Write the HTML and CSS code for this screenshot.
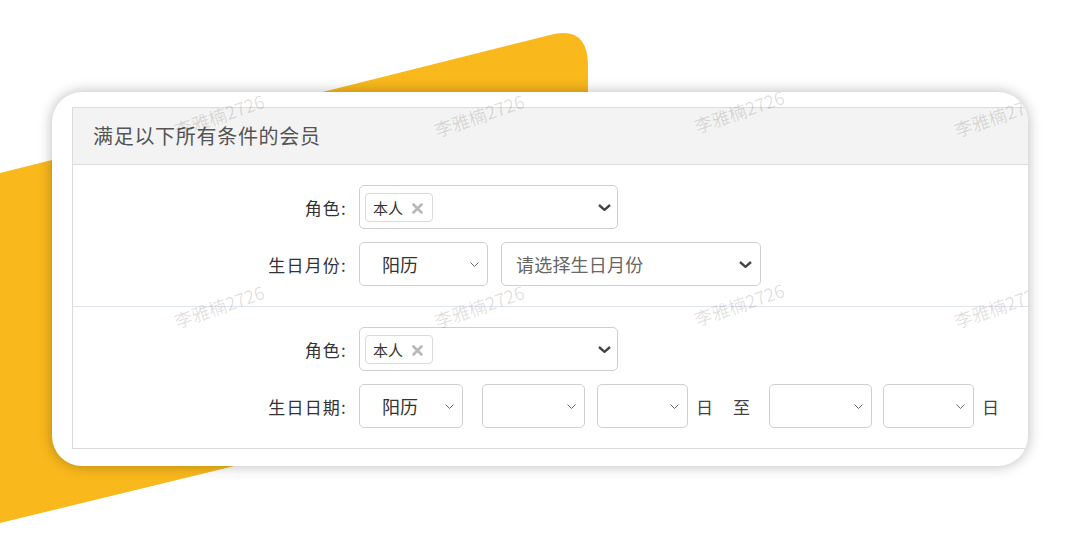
FILE: index.html
```html
<!DOCTYPE html>
<html lang="zh-CN">
<head>
<meta charset="utf-8">
<title>会员条件</title>
<link rel="stylesheet" href="styles.css">
</head>
<body>
<svg class="deco" width="600" height="548" viewBox="0 0 600 548" aria-hidden="true">
  <path d="M0,173 L550,35 Q588,25 588,66 L588,380 L0,523 Z" fill="#F9B81C"/>
</svg>
<div class="card">
  <div class="panel">
    <div class="panel-head">满足以下所有条件的会员</div>
    <div class="section">
      <div class="row">
        <div class="label">角色:</div>
        <div class="sel sel-multi">
          <span class="tag">本人<svg class="tag-x" width="11" height="11" viewBox="0 0 11 11"><path d="M1.5,1.5 L9.5,9.5 M9.5,1.5 L1.5,9.5" stroke="#b8b8b8" stroke-width="2.6" stroke-linecap="round"/></svg></span>
          <svg class="chev-bold" width="13" height="7" viewBox="0 0 13 7"><polyline points="1,1 6.5,5.8 12,1" fill="none" stroke="#444" stroke-width="2.4"/></svg>
        </div>
      </div>
      <div class="row">
        <div class="label">生日月份:</div>
        <div class="sel sel-cal w129">
          <span class="val">阳历</span>
          <svg class="chev-thin" width="9" height="5" viewBox="0 0 9 5"><polyline points="0.5,0.5 4.5,4.5 8.5,0.5" fill="none" stroke="#666" stroke-width="1"/></svg>
        </div>
        <div class="sel sel-month">
          <span class="ph">请选择生日月份</span>
          <svg class="chev-bold" width="13" height="7" viewBox="0 0 13 7"><polyline points="1,1 6.5,5.8 12,1" fill="none" stroke="#444" stroke-width="2.4"/></svg>
        </div>
      </div>
    </div>
    <div class="divider"></div>
    <div class="section">
      <div class="row">
        <div class="label">角色:</div>
        <div class="sel sel-multi">
          <span class="tag">本人<svg class="tag-x" width="11" height="11" viewBox="0 0 11 11"><path d="M1.5,1.5 L9.5,9.5 M9.5,1.5 L1.5,9.5" stroke="#b8b8b8" stroke-width="2.6" stroke-linecap="round"/></svg></span>
          <svg class="chev-bold" width="13" height="7" viewBox="0 0 13 7"><polyline points="1,1 6.5,5.8 12,1" fill="none" stroke="#444" stroke-width="2.4"/></svg>
        </div>
      </div>
      <div class="row">
        <div class="label">生日日期:</div>
        <div class="sel sel-cal w104">
          <span class="val">阳历</span>
          <svg class="chev-thin" width="9" height="5" viewBox="0 0 9 5"><polyline points="0.5,0.5 4.5,4.5 8.5,0.5" fill="none" stroke="#666" stroke-width="1"/></svg>
        </div>
        <div class="sel sel-empty w103 m19">
          <svg class="chev-thin" width="9" height="5" viewBox="0 0 9 5"><polyline points="0.5,0.5 4.5,4.5 8.5,0.5" fill="none" stroke="#666" stroke-width="1"/></svg>
        </div>
        <div class="sel sel-empty w91 m12">
          <svg class="chev-thin" width="9" height="5" viewBox="0 0 9 5"><polyline points="0.5,0.5 4.5,4.5 8.5,0.5" fill="none" stroke="#666" stroke-width="1"/></svg>
        </div>
        <span class="unit u-day">日</span>
        <span class="unit u-to">至</span>
        <div class="sel sel-empty w103 m19">
          <svg class="chev-thin" width="9" height="5" viewBox="0 0 9 5"><polyline points="0.5,0.5 4.5,4.5 8.5,0.5" fill="none" stroke="#666" stroke-width="1"/></svg>
        </div>
        <div class="sel sel-empty w91 m11">
          <svg class="chev-thin" width="9" height="5" viewBox="0 0 9 5"><polyline points="0.5,0.5 4.5,4.5 8.5,0.5" fill="none" stroke="#666" stroke-width="1"/></svg>
        </div>
        <span class="unit u-day">日</span>
      </div>
    </div>
  </div>
  <div class="watermarks" aria-hidden="true">
    <span class="wm" style="left:120px;top:10px">李雅楠2726</span>
    <span class="wm" style="left:380px;top:10px">李雅楠2726</span>
    <span class="wm" style="left:640px;top:6px">李雅楠2726</span>
    <span class="wm" style="left:900px;top:10px">李雅楠2726</span>
    <span class="wm" style="left:120px;top:201px">李雅楠2726</span>
    <span class="wm" style="left:380px;top:201px">李雅楠2726</span>
    <span class="wm" style="left:640px;top:199px">李雅楠2726</span>
    <span class="wm" style="left:900px;top:201px">李雅楠2726</span>
  </div>
</div>
</body>
</html>
```

FILE: styles.css
```css
* { box-sizing: border-box; }
html, body {
  margin: 0;
  padding: 0;
  width: 1080px;
  height: 548px;
  overflow: hidden;
  background: #fff;
  font-family: "Noto Sans CJK SC", "Noto Sans", sans-serif;
  color: #333;
}
body { position: relative; padding-top: 92px; padding-left: 52px; }
.deco { position: absolute; left: 0; top: 0; z-index: 0; }
.card {
  position: relative;
  z-index: 1;
  width: 976px;
  height: 374px;
  background: #fff;
  border-radius: 30px;
  box-shadow: 0 0 14px rgba(0, 0, 0, 0.28);
  overflow: hidden;
  padding: 15px 0 0 20px;
}
.panel {
  width: 1000px;
  border: 1px solid #dcdcdc;
}
.panel-head {
  height: 57px;
  background: #f3f3f3;
  border-bottom: 1px solid #dcdcdc;
  padding-left: 20px;
  font-size: 20px;
  letter-spacing: 0.7px;
  line-height: 55px;
  color: #555;
}
.section { padding: 20px 0; display: flex; flex-direction: column; gap: 13px; }
.divider { height: 1px; background: #dfe3ec; }
.row { display: flex; align-items: center; height: 44px; }
.label {
  width: 274px;
  text-align: right;
  font-size: 17px;
  letter-spacing: 1.2px;
  color: #333;
  margin-right: 12px;
}
.sel {
  position: relative;
  height: 44px;
  border: 1px solid #cfcfcf;
  border-radius: 5px;
  background: #fff;
  display: flex;
  align-items: center;
}
.sel-multi { width: 259px; }
.tag {
  margin-left: 5px;
  height: 29px;
  width: 68px;
  border: 1px solid #dadada;
  border-radius: 4px;
  font-size: 15px;
  color: #333;
  display: flex;
  align-items: center;
  padding-left: 7px;
}
.tag-x { margin-left: 9px; margin-top: 2px; }
.chev-bold { position: absolute; right: 6px; top: 18px; }
.sel-month .chev-bold { right: 8px; }
.chev-thin { position: absolute; right: 8px; top: 19px; }
.sel-cal .val { font-size: 18px; color: #333; padding-left: 22px; }
.w129 { width: 129px; }
.w104 { width: 104px; }
.w103 { width: 103px; }
.w91 { width: 91px; }
.sel-month { width: 260px; margin-left: 13px; }
.sel-month .ph { font-size: 18px; color: #666; padding-left: 14px; letter-spacing: 0.2px; }
.m19 { margin-left: 19px; }
.m12 { margin-left: 12px; }
.m11 { margin-left: 11px; }
.unit { font-size: 17px; color: #444; }
.u-day { margin-left: 8px; }
.u-to { margin-left: 20px; }
.watermarks { position: absolute; inset: 0; pointer-events: none; }
.wm {
  position: absolute;
  font-size: 18px;
  color: rgba(0, 0, 0, 0.13);
  white-space: nowrap;
  transform: rotate(-19deg);
  transform-origin: center;
  font-family: "Noto Sans CJK SC", sans-serif;
}
```
